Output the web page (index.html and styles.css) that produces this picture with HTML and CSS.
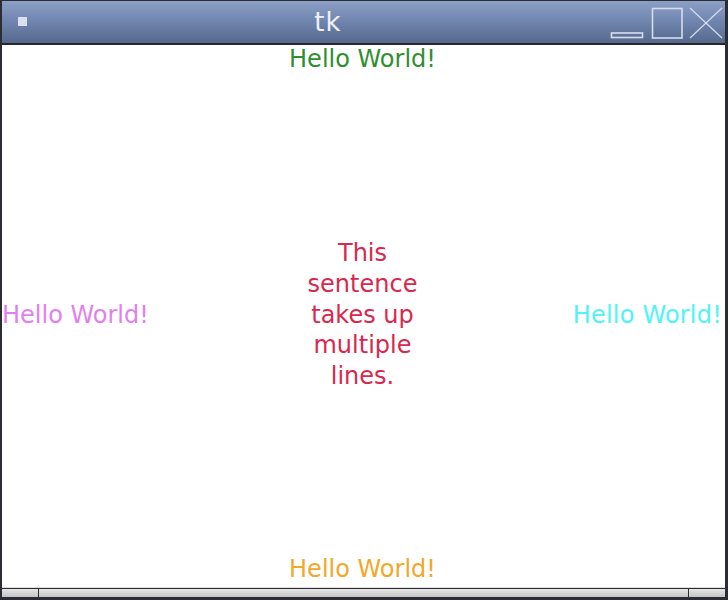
FILE: index.html
```html
<!DOCTYPE html>
<html>
<head>
<meta charset="utf-8">
<link rel="stylesheet" href="styles.css">
</head>
<body>
<div class="window">
  <div class="titlebar">
    <div class="menu-box"><span class="menu-icon"></span></div>
    <div class="title">tk</div>
    <svg class="controls" width="114" height="42" viewBox="0 0 114 42">
      <rect x="1.5" y="32" width="31" height="4.5" fill="none" stroke="#d6dcee" stroke-width="1.6"/>
      <rect x="42.5" y="7.5" width="29.5" height="29.5" fill="none" stroke="#d6dcee" stroke-width="1.6"/>
      <line x1="80" y1="7" x2="112" y2="37" stroke="#d6dcee" stroke-width="1.2"/>
      <line x1="112" y1="7" x2="80" y2="37" stroke="#d6dcee" stroke-width="1.2"/>
    </svg>
  </div>
  <div class="content">
    <div class="label top">Hello World!</div>
    <div class="label left">Hello World!</div>
    <div class="label center">This<br>sentence<br>takes up<br>multiple<br>lines.</div>
    <div class="label right">Hello World!</div>
    <div class="label bottom">Hello World!</div>
  </div>
  <div class="statusbar">
    <div class="seg seg-side"></div>
    <div class="seg seg-main"></div>
    <div class="seg seg-side"></div>
  </div>
</div>
</body>
</html>
```
FILE: styles.css
```css
html, body {
  margin: 0;
  padding: 0;
  background: #ffffff;
}

.window {
  box-sizing: border-box;
  width: 728px;
  height: 600px;
  display: flex;
  flex-direction: column;
  border-top: 1px solid #2b2d33;
  border-left: 2px solid #2b2d33;
  border-right: 3px solid #2b2d33;
  font-family: "DejaVu Sans", "Liberation Sans", sans-serif;
}

.titlebar {
  height: 42px;
  flex: none;
  display: flex;
  align-items: stretch;
  background: linear-gradient(to bottom, #8c9fc6 0%, #7287b0 45%, #56698d 100%);
  border-bottom: 2px solid #26282e;
}

.menu-box {
  width: 40px;
  display: flex;
  align-items: flex-start;
  padding-left: 16px;
  padding-top: 16px;
  box-sizing: border-box;
}

.menu-icon {
  width: 9px;
  height: 9px;
  background: #dcdff2;
}

.title {
  flex: 1;
  text-align: center;
  color: #eef1f8;
  font-size: 26px;
  line-height: 42px;
  letter-spacing: 1px;
  padding-left: 4px;
}

.controls {
  display: block;
  margin-right: 1px;
}

.content {
  flex: 1;
  display: grid;
  grid-template-columns: 1fr auto 1fr;
  grid-template-rows: auto 1fr auto;
  grid-template-areas:
    "top top top"
    "left center right"
    "bottom bottom bottom";
  background: #ffffff;
  border-bottom: 1px solid #dedede;
}

.label {
  font-size: 24px;
  line-height: 28px;
  white-space: nowrap;
}

.top {
  grid-area: top;
  justify-self: center;
  color: #2e8f2e;
  margin-left: -2px;
}

.bottom {
  grid-area: bottom;
  justify-self: center;
  color: #f2a82a;
  margin-left: -2px;
  margin-bottom: 4px;
}

.left {
  grid-area: left;
  justify-self: start;
  align-self: center;
  color: #e27ff0;
  margin-top: 2px;
}

.right {
  grid-area: right;
  justify-self: end;
  align-self: center;
  color: #4ff4f7;
  margin-top: 2px;
  margin-right: 3px;
  letter-spacing: 0.2px;
}

.center {
  grid-area: center;
  align-self: center;
  text-align: center;
  line-height: 30.7px;
  color: #d8284e;
  margin-top: 2px;
  margin-left: -2px;
}

.statusbar {
  height: 8px;
  flex: none;
  display: flex;
  border-top: 1px solid #2b2d33;
  border-bottom: 3px solid #2b2d33;
  background: linear-gradient(to bottom, #e6e6e6, #c4c4c4);
}

.seg-side {
  width: 36px;
}

.seg-main {
  flex: 1;
  border-left: 1px solid #2b2d33;
  border-right: 1px solid #2b2d33;
}
```
